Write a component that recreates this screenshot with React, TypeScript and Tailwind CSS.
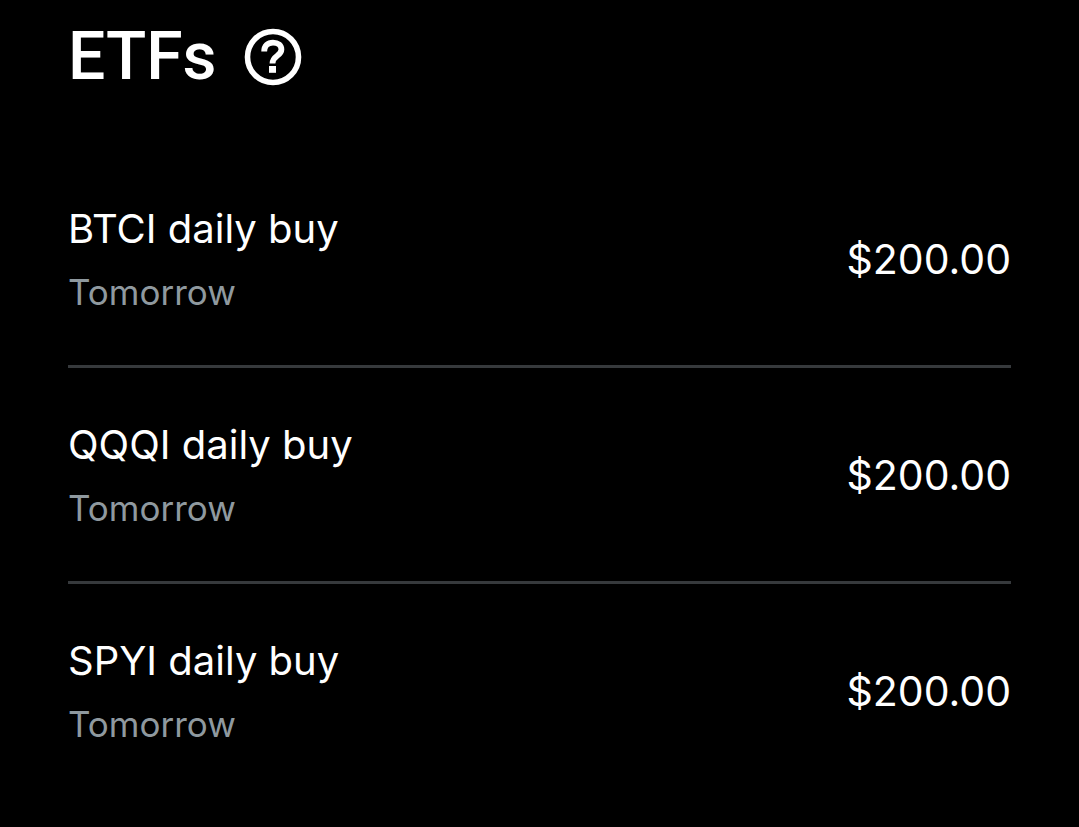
import React from 'react';

interface RecurringBuy {
  symbol: string;
  schedule: string;
  amount: number;
}

const etfs: RecurringBuy[] = [
  { symbol: 'BTCI', schedule: 'Tomorrow', amount: 200 },
  { symbol: 'QQQI', schedule: 'Tomorrow', amount: 200 },
  { symbol: 'SPYI', schedule: 'Tomorrow', amount: 200 },
];

const HelpIcon: React.FC = () => (
  <svg viewBox="0 0 58 58" className="h-[58px] w-[58px]" fill="none" stroke="currentColor" aria-hidden="true">
    <circle cx="29" cy="29" r="25.5" strokeWidth="5.6" />
    <path d="M20.2 23.5C20.2 17.8 23.8 14.6 29 14.6C34.3 14.6 37.4 17.4 37.4 21.5C37.4 28.2 28.5 27.5 28.5 35.5" strokeWidth="5.8" />
    <path d="M25 38h7v6.8h-7z" fill="currentColor" stroke="none" />
  </svg>
);

const App: React.FC = () => {
  return (
    <main className="min-h-screen bg-black px-[68px] pt-5 font-[Inter,sans-serif] text-white">
      {/* Section title */}
      <div className="flex items-center gap-7">
        <h1 className="font-[Roboto,sans-serif] text-[66px] font-medium leading-[74px]">ETFs</h1>
        <button type="button" aria-label="About ETFs" className="rounded-full">
          <HelpIcon />
        </button>
      </div>

      {/* Recurring buys */}
      <ul className="mt-[58px] divide-y-3 divide-[#36393c]">
        {etfs.map((etf) => (
          <li key={etf.symbol} className="flex items-center justify-between py-12">
            <div className="flex flex-col gap-[10px]">
              <p className="text-[40px] leading-[58px]">{etf.symbol} daily buy</p>
              <p className="text-[35px] leading-[49px] text-[#8f999f]">{etf.schedule}</p>
            </div>
            <span className="text-[41px] leading-[58px]">${etf.amount.toFixed(2)}</span>
          </li>
        ))}
      </ul>
    </main>
  );
};

export default App;
